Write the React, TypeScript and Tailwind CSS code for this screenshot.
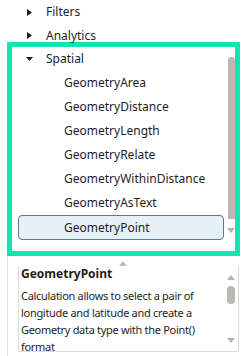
const font = { fontFamily: '"Noto Sans", "Open Sans", Arial, sans-serif' };

function CaretRight() {
  return (
    <svg width="5" height="7" viewBox="0 0 5 7" className="shrink-0">
      <polygon points="0,0 5,3.5 0,7" fill="#1c1c1c" />
    </svg>
  );
}

function CaretDown() {
  return (
    <svg width="7" height="4" viewBox="0 0 7 4" className="shrink-0">
      <polygon points="0,0 7,0 3.5,4" fill="#1c1c1c" />
    </svg>
  );
}

function ArrowUp({ color = "#b3b1ad" }: { color?: string }) {
  return (
    <svg width="8" height="5" viewBox="0 0 8 5">
      <polygon points="0,5 8,5 4,0" fill={color} />
    </svg>
  );
}

function ArrowDown({ color = "#b3b1ad" }: { color?: string }) {
  return (
    <svg width="8" height="5" viewBox="0 0 8 5">
      <polygon points="0,0 8,0 4,5" fill={color} />
    </svg>
  );
}

const children = [
  "GeometryArea",
  "GeometryDistance",
  "GeometryLength",
  "GeometryRelate",
  "GeometryWithinDistance",
  "GeometryAsText",
];

export default function App() {
  return (
    <div
      className="w-[246px] h-[356px] bg-white overflow-hidden text-[12px] text-[#1e1e1e]"
      style={font}
    >
      {/* collapsed groups */}
      <div className="h-[24px] flex items-center pl-[27px] gap-[14px]">
        <CaretRight />
        <span>Filters</span>
      </div>
      <div className="h-[18px] flex items-start pl-[27px]">
        <div className="h-[23px] flex items-center gap-[14px]">
          <CaretRight />
          <span>Analytics</span>
        </div>
      </div>

      {/* highlighted list */}
      <div className="ml-[7px] w-[233px] h-[214px] border-[5px] border-[#12e4b2] flex">
        <div className="flex-1 flex flex-col">
          <div className="h-[24px] flex items-center pl-[14px] gap-[13px]">
            <CaretDown />
            <span>Spatial</span>
          </div>
          {children.map((c) => (
            <div key={c} className="h-[24px] flex items-center pl-[52px]">
              {c}
            </div>
          ))}
          <div className="ml-[6px] mr-[3px] h-[25px] flex items-center pl-[45px] rounded-[4px] border border-[#4a7f9f] bg-[#e6f0f6]">
            GeometryPoint
          </div>
        </div>
        <div className="w-[8px] flex flex-col items-center">
          <div className="mt-[10px] w-[7px] h-[162px] bg-[#bcb8b2] rounded-t-[4px]" />
          <div className="mt-[9px]">
            <ArrowDown />
          </div>
        </div>
      </div>

      {/* description pane */}
      <div className="ml-[7px] w-[233px] h-[100px] border-l border-[#e2e2e2] flex flex-col">
        <div className="h-[10px] flex items-end justify-center pr-[2px]">
          <ArrowUp color="#bdbbb7" />
        </div>
        <div className="ml-[10px] mr-[1px] h-[86px] border-l border-r border-b border-[#dcdcdc] flex">
          <div className="flex-1 pl-[2px]">
            <div className="font-bold h-[17px] leading-[15px]">GeometryPoint</div>
            <div className="mt-[4px] text-[11px] leading-[17px] tracking-[-0.3px]">
              Calculation allows to select a pair of
              <br />
              longitude and latitude and create a
              <br />
              Geometry data type with the Point()
              <br />
              format
            </div>
          </div>
          <div className="w-[9px] mr-[3px] flex flex-col items-center">
            <div className="mt-[9px]">
              <ArrowUp />
            </div>
            <div className="mt-[6px] w-[8px] h-[18px] rounded-full bg-[#bcb8b2]" />
            <div className="mt-[34px]">
              <ArrowDown />
            </div>
          </div>
        </div>
      </div>
    </div>
  );
}
